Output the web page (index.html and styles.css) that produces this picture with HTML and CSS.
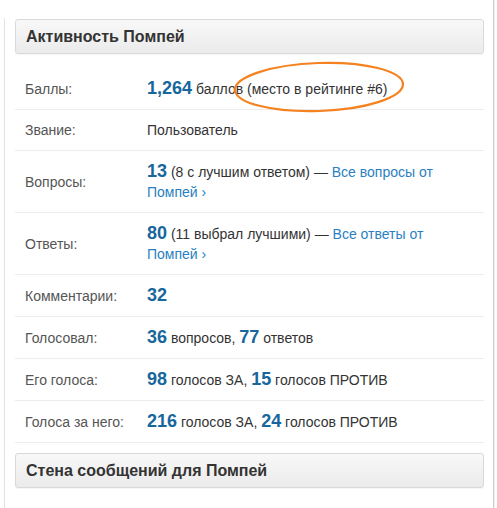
FILE: index.html
```html
<!DOCTYPE html>
<html lang="ru">
<head>
  <meta charset="UTF-8">
  <title>Активность Помпей</title>
  <link rel="stylesheet" href="styles.css">
</head>
<body>
  <div class="page">
    <div class="column">
      <div class="box-header">Активность Помпей</div>

      <div class="stats">
        <div class="stat-row">
          <div class="stat-label">Баллы:</div>
          <div class="stat-value">
            <span class="num">1,264</span> баллов
            <span class="rank">(место в рейтинге #6)
              <svg class="circled" width="176" height="56" viewBox="0 0 176 56">
                <ellipse cx="88" cy="28" rx="84" ry="24" transform="rotate(-2 88 28)" fill="none" stroke="#f5821f" stroke-width="2.2"/>
              </svg>
            </span>
          </div>
        </div>
        <div class="stat-row">
          <div class="stat-label">Звание:</div>
          <div class="stat-value">Пользователь</div>
        </div>
        <div class="stat-row">
          <div class="stat-label">Вопросы:</div>
          <div class="stat-value"><span class="num">13</span> (8 с лучшим ответом) — <a href="#">Все вопросы от Помпей ›</a></div>
        </div>
        <div class="stat-row">
          <div class="stat-label">Ответы:</div>
          <div class="stat-value"><span class="num">80</span> (11 выбрал лучшими) — <a href="#">Все ответы от Помпей ›</a></div>
        </div>
        <div class="stat-row">
          <div class="stat-label">Комментарии:</div>
          <div class="stat-value"><span class="num">32</span></div>
        </div>
        <div class="stat-row">
          <div class="stat-label">Голосовал:</div>
          <div class="stat-value"><span class="num">36</span> вопросов, <span class="num">77</span> ответов</div>
        </div>
        <div class="stat-row">
          <div class="stat-label">Его голоса:</div>
          <div class="stat-value"><span class="num">98</span> голосов ЗА, <span class="num">15</span> голосов ПРОТИВ</div>
        </div>
        <div class="stat-row">
          <div class="stat-label">Голоса за него:</div>
          <div class="stat-value"><span class="num">216</span> голосов ЗА, <span class="num">24</span> голосов ПРОТИВ</div>
        </div>
      </div>

      <div class="box-header">Стена сообщений для Помпей</div>
    </div>
  </div>
</body>
</html>
```

FILE: styles.css
```css
html, body {
  margin: 0;
  background: #fff;
}

body {
  font-family: "Liberation Sans", Arial, sans-serif;
  font-size: 14px;
  color: #333;
}

.page {
  width: 494px;
  min-height: 508px;
  border-right: 1px solid #cfcfcf;
  box-shadow: 1px 0 0 #ececec;
  box-sizing: border-box;
  padding-top: 18px;
}

.column {
  margin-left: 4px;
  border-left: 1px solid #e2e2e2;
  padding: 1px 9px 0 10px;
  min-height: 490px;
}

.box-header {
  height: 33px;
  line-height: 33px;
  padding-left: 10px;
  border: 1px solid #d9d9d9;
  border-radius: 3px;
  background: linear-gradient(#f8f8f8, #ebebeb);
  box-shadow: 0 1px 1px rgba(0, 0, 0, 0.04);
  font-size: 16px;
  font-weight: bold;
  color: #333;
}

.stats {
  margin: 14px 0 10px;
}

.stat-row {
  display: flex;
  align-items: center;
  padding: 10px 0;
  border-bottom: 1px solid #ececec;
}

.stat-label {
  width: 122px;
  flex: none;
  padding-left: 10px;
  color: #555;
}

.stat-value {
  flex: 1;
  line-height: 20px;
  padding-right: 40px;
}

.num {
  font-size: 18px;
  font-weight: bold;
  line-height: 21px;
  color: #17679c;
}

.stat-value a {
  color: #2a80c2;
  text-decoration: none;
}

.rank {
  position: relative;
}

.circled {
  position: absolute;
  left: 50%;
  top: 50%;
  margin-left: -86px;
  margin-top: -30px;
  pointer-events: none;
}
```
